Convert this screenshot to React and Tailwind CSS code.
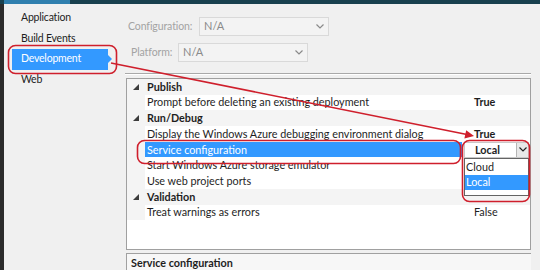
import React from 'react'

const font = { fontFamily: 'Lato, "Noto Sans", sans-serif' }

function Expander() {
  return (
    <svg width="6" height="6" viewBox="0 0 6 6" className="shrink-0">
      <polygon points="6,0 6,6 0,6" fill="#3c3c3c" />
    </svg>
  )
}

function Chevron({ color = '#8a8a8a' }) {
  return (
    <svg width="8" height="5" viewBox="0 0 8 5">
      <polyline points="0.5,0.5 4,4 7.5,0.5" fill="none" stroke={color} strokeWidth="1.2" />
    </svg>
  )
}

const rows = [
  { cat: true, name: 'Publish' },
  { name: 'Prompt before deleting an existing deployment', value: 'True', bold: true },
  { cat: true, name: 'Run/Debug' },
  { name: 'Display the Windows Azure debugging environment dialog', value: 'True', bold: true },
  { name: 'Service configuration', selected: true, combo: true },
  { name: 'Start Windows Azure storage emulator' },
  { name: 'Use web project ports' },
  { cat: true, name: 'Validation' },
  { name: 'Treat warnings as errors', value: 'False' },
]

export default function App() {
  return (
    <div className="w-[540px] h-[270px] relative overflow-hidden bg-[#f0f0f0] text-[10.8px] text-[#1e1e1e] flex flex-col" style={font}>
      {/* window top strip */}
      <div className="h-[4px] bg-[#18404e] flex shrink-0">
        <div className="ml-[4px] w-[66px] bg-[#2f7fae]" />
      </div>

      <div className="flex flex-1 min-h-0">
        <div className="w-[4px] bg-[#2b2b2b] shrink-0" />

        {/* nav */}
        <div className="w-[121px] shrink-0 pt-[4px] pl-[8px] text-[10.5px] tracking-[-0.2px]">
          <div className="h-[20.5px] flex items-center pl-[9px]">Application</div>
          <div className="h-[20.5px] flex items-center pl-[9px]">Build Events</div>
          <div className="h-[20.5px] flex items-center relative">
            <div className="w-[96px] h-full bg-[#3399ff] text-white flex items-center pl-[9px]">Development</div>
            <div className="w-0 h-0 border-y-[4px] border-y-transparent border-l-[4px] border-l-[#3399ff]" />
          </div>
          <div className="h-[20.5px] flex items-center pl-[9px]">Web</div>
        </div>

        {/* content */}
        <div className="flex-1 flex flex-col pr-[9px]">
          <div className="flex items-center h-[19px] mt-[13px]">
            <span className="ml-[3px] w-[71px] whitespace-nowrap text-[#a3a3a3] text-[10.5px] tracking-[-0.1px]">Configuration:</span>
            <div className="w-[130px] h-[19px] border border-[#d9d9d9] bg-[#f3f3f3] flex items-center justify-between px-[4px] text-[#8a8a8a] text-[11px]">
              <span>N/A</span>
              <Chevron />
            </div>
          </div>
          <div className="flex items-center h-[19px] mt-[7px]">
            <span className="ml-[6px] w-[47px] whitespace-nowrap text-[#a3a3a3] text-[10.5px] tracking-[-0.1px]">Platform:</span>
            <div className="w-[130px] h-[19px] border border-[#d9d9d9] bg-[#f3f3f3] flex items-center justify-between px-[4px] text-[#8a8a8a] text-[11px]">
              <span>N/A</span>
              <Chevron />
            </div>
          </div>

          <div className="mt-[11px] h-[2px] border-t border-[#a9a9a9] border-b-white border-b" />

          {/* property grid */}
          <div className="mt-[3px] ml-[1px] h-[180px] border border-[#a0a0a0] bg-white flex flex-col relative">
            {rows.map((r, i) => (
              <div key={i} className={`h-[15.7px] flex items-center shrink-0 ${r.cat ? 'bg-[#f4f4f4]' : ''}`}>
                <div className="w-[18px] h-full flex items-center justify-center bg-[#f4f4f4] shrink-0">
                  {r.cat && <Expander />}
                </div>
                <div className={`w-[317px] h-full flex items-center pl-[2px] whitespace-nowrap overflow-hidden ${r.cat ? 'font-bold' : ''} ${r.selected ? 'bg-[#3399ff] text-white' : ''}`}>
                  {r.name}
                </div>
                <div className={`flex-1 h-full flex items-center pl-[12px] ${r.bold ? 'font-bold' : ''}`}>
                  {r.value}
                </div>
              </div>
            ))}
            <div className="flex-1 flex">
              <div className="w-[18px] bg-white" />
            </div>

            {/* open combo for Service configuration */}
            <div className="absolute left-[337px] top-[63px] w-[65px] flex flex-col">
              <div className="h-[15.5px] bg-white border border-[#c8c8c8] flex items-center justify-between">
                <span className="pl-[10px] font-bold">Local</span>
                <div className="w-[12px] h-full bg-[#e8e8e8] border-l border-[#b5b5b5] flex items-center justify-center">
                  <Chevron color="#222" />
                </div>
              </div>
              <div className="h-[38px] bg-white border border-[#646464] flex flex-col pt-[1px]">
                <div className="h-[15px] flex items-center pl-[1px]">Cloud</div>
                <div className="h-[15px] flex items-center pl-[1px] bg-[#3399ff] text-white">Local</div>
              </div>
            </div>
          </div>

          <div className="mt-[3px] ml-[1px] flex-1 border-t border-l border-[#a0a0a0] bg-[#f7f7f7] pl-[4px] pt-[2px] font-bold leading-[14px]">
            Service configuration
          </div>
        </div>
      </div>

      {/* annotations */}
      <svg className="absolute inset-0 pointer-events-none" width="540" height="270">
        <rect x="8.5" y="45.5" width="108" height="28" rx="7" fill="none" stroke="#cf1f2c" strokeWidth="1.6" />
        <rect x="137.5" y="140.5" width="323" height="23" rx="7" fill="none" stroke="#cf1f2c" strokeWidth="1.6" />
        <rect x="462.5" y="140.5" width="67" height="61" rx="7" fill="none" stroke="#cf1f2c" strokeWidth="1.6" />
        <line x1="111" y1="63" x2="467" y2="134.5" stroke="#cf1f2c" strokeWidth="1.6" />
        <polygon points="474,136 464.4,138.6 466.2,130.2" fill="#cf1f2c" />
      </svg>
    </div>
  )
}
